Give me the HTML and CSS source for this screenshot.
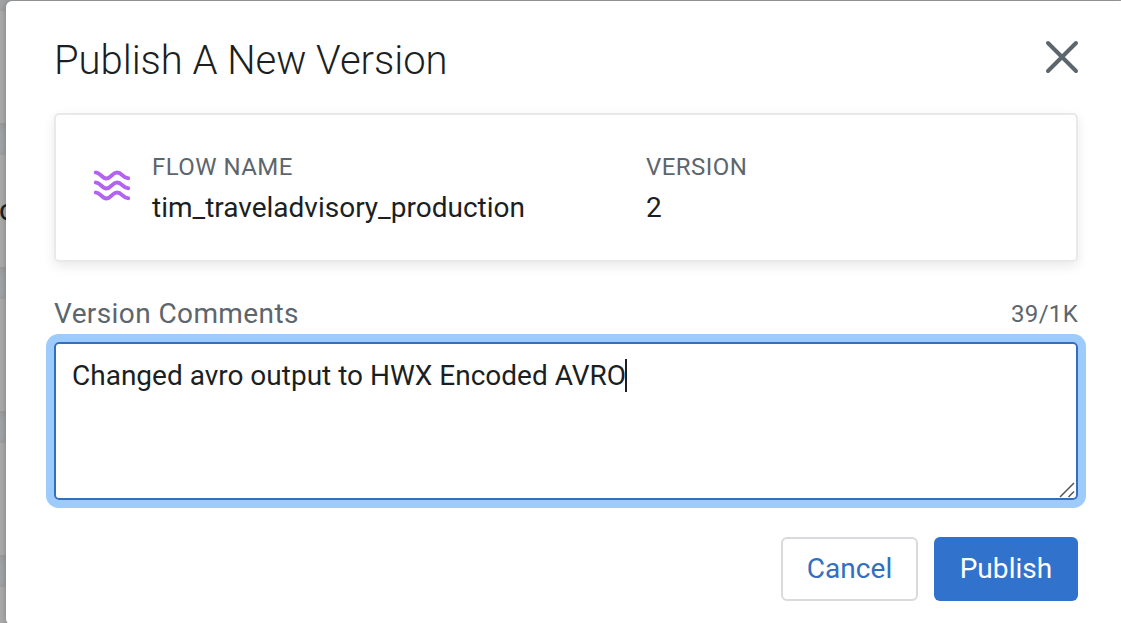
FILE: index.html
```html
<!DOCTYPE html>
<html lang="en">
<head>
<meta charset="utf-8">
<title>Publish A New Version</title>
<link rel="stylesheet" href="styles.css">
</head>
<body>
<div class="page">
  <div class="backdrop">
    <div class="row"></div>
    <div class="row"><span class="row-text">c</span></div>
    <div class="row"></div>
    <div class="row"></div>
    <div class="row"></div>
  </div>
  <main class="modal">
    <header class="modal-header">
      <h1 class="title">Publish A New Version</h1>
      <svg class="close" viewBox="0 0 34 34" width="34" height="34"><path d="M3 3 31 31M31 3 3 31"/></svg>
    </header>
    <section class="flow-card">
      <svg class="flow-icon" viewBox="0 0 40 36" width="40" height="36">
        <path d="M3.800 5.500C8.500 5.500 9.500 11.500 14.300 11.500S20 5.500 25 5.500S31 11.300 36.200 11.300"/>
        <path d="M3.800 15.500C8.500 15.500 9.500 21.500 14.300 21.500S20 15.500 25 15.500S31 21.300 36.200 21.300"/>
        <path d="M3.800 25.500C8.500 25.500 9.500 31.500 14.300 31.500S20 25.500 25 25.500S31 31.300 36.200 31.300"/>
      </svg>
      <div class="field field-name"><span class="label">FLOW NAME</span><span class="value">tim_traveladvisory_production</span></div>
      <div class="field"><span class="label">VERSION</span><span class="value">2</span></div>
    </section>
    <div class="comment-head"><span class="comment-label">Version Comments</span><span class="counter">39/1K</span></div>
    <div class="comment-box"><span class="comment-text">Changed avro output to HWX Encoded AVRO</span><span class="caret"></span>
      <svg class="grip" viewBox="0 0 16 16" width="16" height="16"><path d="M1 15 15 1M9.500 15 15 9.500"/></svg>
    </div>
    <footer class="actions">
      <button class="btn btn-cancel">Cancel</button>
      <button class="btn btn-publish">Publish</button>
    </footer>
  </main>
</div>
</body>
</html>
```
FILE: styles.css
```css
* { box-sizing: border-box; }
body { margin: 0; font-family: Roboto, "Liberation Sans", sans-serif; color: #1b1f23; }
.page { display: flex; width: 1121px; height: 623px; overflow: hidden; background: #a2a3a5; }
.backdrop { display: flex; flex-direction: column; gap: 32px; width: 6px; flex: none; padding-top: 11px; }
.row { height: 112px; flex: none; background: #aaa; box-shadow: 0 2px 8px rgba(0, 0, 0, .15); }
.row-text { display: block; padding-top: 38px; margin-left: -1px; font-size: 30px; line-height: 34px; }
.modal { position: relative; flex: 1; height: 624px; margin-top: 1px; padding: 33px 43px 0 48px; background: #fff; border-radius: 6px 0 0 6px; box-shadow: 0 0 6px rgba(0, 0, 0, .25); }
.modal-header { display: flex; justify-content: space-between; height: 79px; }
.title { margin: 0; padding-top: 1px; font-size: 40px; font-weight: 300; line-height: 52px; letter-spacing: -.03px; white-space: nowrap; }
.close { margin: 6px -1px 0 0; fill: none; stroke: #5d666c; stroke-width: 4; stroke-linecap: round; }
.flow-card { display: flex; height: 149px; padding: 38px; border: 2px solid #e9e9ea; border-radius: 5px; box-shadow: 0 4px 12px rgba(0, 0, 0, .09); }
.flow-icon { flex: none; margin: 14px 20px 0 -2px; fill: none; stroke: #b264f0; stroke-width: 4; stroke-linecap: round; }
.field { display: flex; flex-direction: column; }
.field-name { width: 494px; }
.label { height: 30px; font-size: 24px; line-height: 28px; letter-spacing: .45px; color: #5d666c; }
.value { margin-top: 9px; font-size: 28px; line-height: 36px; }
.comment-head { display: flex; justify-content: space-between; height: 80px; padding-top: 34px; line-height: 36px; color: #5d666c; }
.comment-label { font-size: 28px; letter-spacing: .4px; }
.counter { font-size: 24px; letter-spacing: .3px; }
.comment-box { position: relative; display: flex; height: 158px; padding: 14px 16px; border: 2px solid #326fc0; border-radius: 5px; box-shadow: 0 0 0 8px #9dcbfb; }
.comment-text { font-size: 28px; line-height: 36px; }
.caret { width: 2px; height: 33px; margin: 1px 0 0 -1px; background: #1b1f23; }
.grip { position: absolute; right: 1px; bottom: 0; fill: none; stroke: #555; stroke-width: 1.5; }
.actions { display: flex; justify-content: flex-end; gap: 16px; padding-top: 37px; }
.btn { height: 64px; padding: 0; font: 400 28px/36px Roboto, "Liberation Sans", sans-serif; letter-spacing: .05px; border-radius: 6px; }
.btn-cancel { width: 137px; color: #326fc0; background: #fff; border: 2px solid #d8dadd; }
.btn-publish { width: 144px; color: #fff; background: #3173cc; border: 0; }
```
